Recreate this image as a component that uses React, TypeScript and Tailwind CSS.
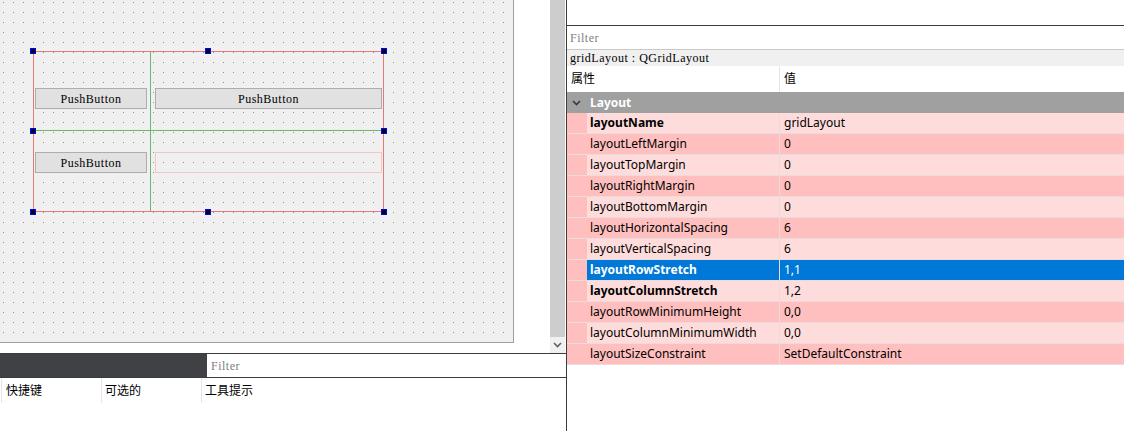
import React from "react";

// property rows of the editor
interface Prop {
  name: string;
  value: string;
  bold?: boolean;
}

const props: Prop[] = [
  { name: "layoutName", value: "gridLayout", bold: true },
  { name: "layoutLeftMargin", value: "0" },
  { name: "layoutTopMargin", value: "0" },
  { name: "layoutRightMargin", value: "0" },
  { name: "layoutBottomMargin", value: "0" },
  { name: "layoutHorizontalSpacing", value: "6" },
  { name: "layoutVerticalSpacing", value: "6" },
  { name: "layoutRowStretch", value: "1,1", bold: true },
  { name: "layoutColumnStretch", value: "1,2", bold: true },
  { name: "layoutRowMinimumHeight", value: "0,0" },
  { name: "layoutColumnMinimumWidth", value: "0,0" },
  { name: "layoutSizeConstraint", value: "SetDefaultConstraint" },
];

const SELECTED = 7;

const bitmap = "font-['Liberation_Serif',serif] text-[12px] tracking-[0.5px]";
const ui = "font-['Noto_Sans','Noto_Sans_CJK_SC',sans-serif] text-[12px]";

// selection handle centred on a point
function Handle({ x, y }: { x: number; y: number }) {
  return (
    <div
      className="absolute w-[6px] h-[6px] bg-black border border-[#0000ff]"
      style={{ left: x - 3, top: y - 3 }}
    />
  );
}

function PushButton({ x, y, w }: { x: number; y: number; w: number }) {
  return (
    <div
      className={`absolute h-[21px] bg-[#e1e1e1] border border-[#adadad] flex items-center justify-center text-black ${bitmap}`}
      style={{ left: x, top: y, width: w }}
    >
      PushButton
    </div>
  );
}

function FormCanvas() {
  return (
    <div className="relative w-[514px] h-[343px] bg-[#f0f0f0] border-r border-b border-[#a0a0a0] overflow-hidden">
      <svg className="absolute inset-0" width="514" height="343" shapeRendering="crispEdges">
        <defs>
          <pattern id="dots" x="3" y="2" width="10" height="10" patternUnits="userSpaceOnUse">
            <rect width="1" height="1" fill="#8e8e8e" />
          </pattern>
        </defs>
        <rect width="514" height="343" fill="url(#dots)" />
      </svg>

      {/* grid layout frame */}
      <div className="absolute left-[33px] top-[51px] w-[351px] h-[161px] border border-[#e87878]" />
      <div className="absolute left-[150px] top-[52px] w-[1px] h-[159px] bg-[#68b868]" />
      <div className="absolute left-[34px] top-[130px] w-[349px] h-[1px] bg-[#68b868]" />

      <PushButton x={35} y={88} w={112} />
      <PushButton x={155} y={88} w={227} />
      <PushButton x={35} y={152} w={112} />
      <div className="absolute left-[155px] top-[152px] w-[227px] h-[21px] border border-[#f2c6c6]" />

      <Handle x={33} y={51} />
      <Handle x={208} y={51} />
      <Handle x={384} y={51} />
      <Handle x={33} y={131} />
      <Handle x={384} y={131} />
      <Handle x={33} y={212} />
      <Handle x={208} y={212} />
      <Handle x={384} y={212} />
    </div>
  );
}

function Chevron({ className }: { className?: string }) {
  return (
    <svg width="9" height="6" viewBox="0 0 9 6" className={className}>
      <path d="M1 1 L4.5 4.5 L8 1" fill="none" stroke="currentColor" strokeWidth="1.6" />
    </svg>
  );
}

function PropRow({ p, i }: { p: Prop; i: number }) {
  const selected = i === SELECTED;
  const dark = i % 2 === 1;
  const body = selected ? "bg-[#0078d7] text-white" : dark ? "bg-[#ffbfbf] text-black" : "bg-[#ffdcdc] text-black";
  return (
    <div className="flex h-[21px] border-b border-[#eadcdc]">
      <div className="w-[20px] bg-[#ffbfbf]" />
      <div className={`flex flex-1 ${body}`}>
        <div className={`w-[193px] pl-[3px] flex items-center border-r border-[#eadcdc] ${p.bold ? "font-bold" : ""}`}>
          {p.name}
        </div>
        <div className="flex-1 pl-[4px] flex items-center">{p.value}</div>
      </div>
    </div>
  );
}

export default function App() {
  return (
    <div className={`flex w-[1124px] h-[431px] bg-white overflow-hidden ${ui}`}>
      {/* left: form editor + action list */}
      <div className="w-[566px] flex flex-col">
        <div className="h-[353px] flex">
          <div className="flex-1 bg-white">
            <FormCanvas />
          </div>
          <div className="w-[15px] flex flex-col">
            <div className="flex-1 bg-[#cdcdcd]" />
            <div className="h-[16px] bg-[#f0f0f0] flex items-center justify-center text-[#606060]">
              <Chevron />
            </div>
          </div>
          <div className="w-[1px] bg-white" />
        </div>

        <div className="border-t border-[#3c3c3c]">
          <div className="flex h-[24px] border-b border-[#3c3c3c]">
            <div className="w-[207px] bg-[#404144]" />
            <div className={`flex-1 bg-white flex items-center pl-[4px] text-[#808080] ${bitmap}`}>Filter</div>
          </div>
          <div className="flex h-[25px] items-center text-black">
            <div className="w-[2px] h-full border-r border-[#e5e5e5]" />
            <div className="w-[100px] h-full pl-[4px] flex items-center border-r border-[#e5e5e5]">快捷键</div>
            <div className="w-[100px] h-full pl-[3px] flex items-center border-r border-[#e5e5e5]">可选的</div>
            <div className="flex-1 pl-[3px]">工具提示</div>
          </div>
        </div>
      </div>

      <div className="w-[1px] bg-[#3c3c3c]" />

      {/* right: property editor */}
      <div className="flex-1 flex flex-col">
        <div className="h-[26px] bg-white border-b border-[#3c3c3c]" />
        <div className={`h-[24px] bg-white flex items-center pl-[3px] text-[#808080] border-b border-[#c8c8c8] ${bitmap}`}>
          Filter
        </div>
        <div className={`h-[16px] bg-[#f0f0f0] flex items-center pl-[3px] text-black ${bitmap}`}>
          gridLayout : QGridLayout
        </div>
        <div className="h-[26px] flex text-black">
          <div className="w-[213px] pl-[4px] flex items-center border-r border-[#e5e5e5]">属性</div>
          <div className="flex-1 pl-[4px] flex items-center">值</div>
        </div>
        <div className="h-[21px] bg-[#a0a0a0] flex items-center">
          <Chevron className="ml-[5px] text-[#3a3a3a]" />
          <span className="ml-[9px] font-bold text-white">Layout</span>
        </div>
        {props.map((p, i) => (
          <PropRow key={p.name} p={p} i={i} />
        ))}
      </div>
    </div>
  );
}
